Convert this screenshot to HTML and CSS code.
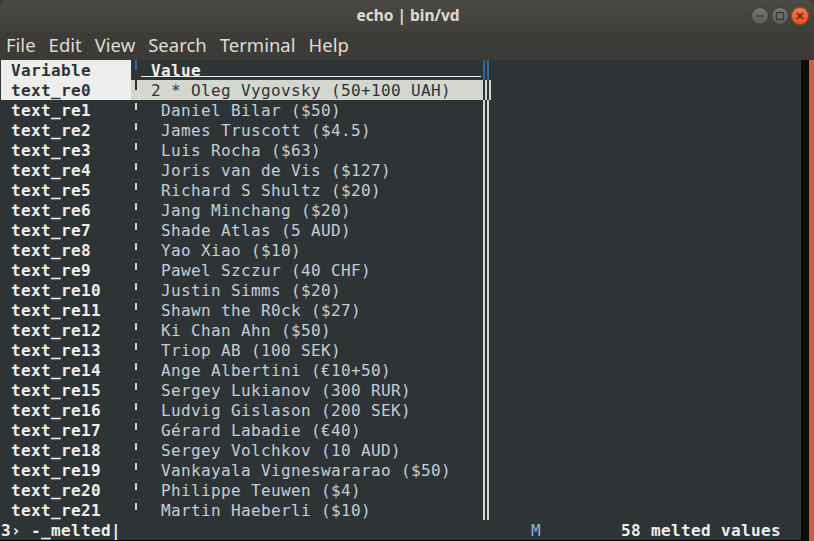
FILE: index.html
```html
<!DOCTYPE html>
<html>
<head>
<meta charset="utf-8">
<link rel="stylesheet" href="styles.css">
</head>
<body>
<div class="window">
  <header class="titlebar">
    <span></span>
    <span class="title">echo | bin/vd</span>
    <div class="controls">
      <span class="btn btn-min"><svg width="18" height="18" viewBox="0 0 18 18"><line x1="5" y1="9" x2="13" y2="9" stroke="#3a3935" stroke-width="1.4"/></svg></span>
      <span class="btn btn-max"><svg width="18" height="18" viewBox="0 0 18 18"><rect x="5.5" y="5.5" width="7" height="7" fill="none" stroke="#3a3935" stroke-width="1.3"/></svg></span>
      <span class="btn btn-close"><svg width="18" height="18" viewBox="0 0 18 18"><path d="M6 6 L12 12 M12 6 L6 12" stroke="#4a1a08" stroke-width="1.4"/></svg></span>
    </div>
  </header>
  <nav class="menubar">
    <span>File</span><span>Edit</span><span>View</span><span>Search</span><span>Terminal</span><span>Help</span>
  </nav>
  <div class="body">
    <div class="term">
      <div class="row head">
        <span class="k cur"> Variable</span><span class="s1 blue"></span><span class="v ul"> Value</span><span class="s2 blue"></span><span class="rest"></span>
      </div>
      <div class="row sel">
        <span class="k cur"> text_re0</span><span class="s1"></span><span class="v"> 2 * Oleg Vygovsky (50+100 UAH)</span><span class="s2"></span><span class="rest"></span>
      </div>
      <div class="row"><span class="k"> text_re1</span><span class="s1"></span><span class="v">  Daniel Bilar ($50)</span><span class="s2"></span><span class="rest"></span></div>
      <div class="row"><span class="k"> text_re2</span><span class="s1"></span><span class="v">  James Truscott ($4.5)</span><span class="s2"></span><span class="rest"></span></div>
      <div class="row"><span class="k"> text_re3</span><span class="s1"></span><span class="v">  Luis Rocha ($63)</span><span class="s2"></span><span class="rest"></span></div>
      <div class="row"><span class="k"> text_re4</span><span class="s1"></span><span class="v">  Joris van de Vis ($127)</span><span class="s2"></span><span class="rest"></span></div>
      <div class="row"><span class="k"> text_re5</span><span class="s1"></span><span class="v">  Richard S Shultz ($20)</span><span class="s2"></span><span class="rest"></span></div>
      <div class="row"><span class="k"> text_re6</span><span class="s1"></span><span class="v">  Jang Minchang ($20)</span><span class="s2"></span><span class="rest"></span></div>
      <div class="row"><span class="k"> text_re7</span><span class="s1"></span><span class="v">  Shade Atlas (5 AUD)</span><span class="s2"></span><span class="rest"></span></div>
      <div class="row"><span class="k"> text_re8</span><span class="s1"></span><span class="v">  Yao Xiao ($10)</span><span class="s2"></span><span class="rest"></span></div>
      <div class="row"><span class="k"> text_re9</span><span class="s1"></span><span class="v">  Pawel Szczur (40 CHF)</span><span class="s2"></span><span class="rest"></span></div>
      <div class="row"><span class="k"> text_re10</span><span class="s1"></span><span class="v">  Justin Simms ($20)</span><span class="s2"></span><span class="rest"></span></div>
      <div class="row"><span class="k"> text_re11</span><span class="s1"></span><span class="v">  Shawn the R0ck ($27)</span><span class="s2"></span><span class="rest"></span></div>
      <div class="row"><span class="k"> text_re12</span><span class="s1"></span><span class="v">  Ki Chan Ahn ($50)</span><span class="s2"></span><span class="rest"></span></div>
      <div class="row"><span class="k"> text_re13</span><span class="s1"></span><span class="v">  Triop AB (100 SEK)</span><span class="s2"></span><span class="rest"></span></div>
      <div class="row"><span class="k"> text_re14</span><span class="s1"></span><span class="v">  Ange Albertini (€10+50)</span><span class="s2"></span><span class="rest"></span></div>
      <div class="row"><span class="k"> text_re15</span><span class="s1"></span><span class="v">  Sergey Lukianov (300 RUR)</span><span class="s2"></span><span class="rest"></span></div>
      <div class="row"><span class="k"> text_re16</span><span class="s1"></span><span class="v">  Ludvig Gislason (200 SEK)</span><span class="s2"></span><span class="rest"></span></div>
      <div class="row"><span class="k"> text_re17</span><span class="s1"></span><span class="v">  Gérard Labadie (€40)</span><span class="s2"></span><span class="rest"></span></div>
      <div class="row"><span class="k"> text_re18</span><span class="s1"></span><span class="v">  Sergey Volchkov (10 AUD)</span><span class="s2"></span><span class="rest"></span></div>
      <div class="row"><span class="k"> text_re19</span><span class="s1"></span><span class="v">  Vankayala Vigneswararao ($50)</span><span class="s2"></span><span class="rest"></span></div>
      <div class="row"><span class="k"> text_re20</span><span class="s1"></span><span class="v">  Philippe Teuwen ($4)</span><span class="s2"></span><span class="rest"></span></div>
      <div class="row"><span class="k"> text_re21</span><span class="s1"></span><span class="v">  Martin Haeberli ($10)</span><span class="s2"></span><span class="rest"></span></div>
      <div class="row status">
        <span class="st-left">3› -_melted|</span><span class="st-mode">M</span><span class="st-right">58 melted values</span>
      </div>
    </div>
    <div class="scroll"></div>
    <div class="edge"></div>
  </div>
</div>
</body>
</html>
```

FILE: styles.css
```css
html, body {
  margin: 0;
  padding: 0;
  background: #2b2b29;
}
.window {
  width: 814px;
  height: 541px;
  display: flex;
  flex-direction: column;
  overflow: hidden;
  background: #3c3b37;
}
.titlebar {
  height: 32px;
  flex: none;
  display: grid;
  grid-template-columns: 1fr auto 1fr;
  align-items: center;
  background: linear-gradient(#4a4944, #3f3e3a);
  border-radius: 7px 7px 0 0;
}
.title {
  font-family: "Noto Sans", "DejaVu Sans", sans-serif;
  font-weight: bold;
  font-size: 15.5px;
  color: #dfdbd2;
  padding-left: 2px;
  padding-bottom: 2px;
}
.controls {
  justify-self: end;
  display: flex;
  gap: 2px;
  padding-right: 5px;
  padding-bottom: 1px;
}
.btn {
  width: 18px;
  height: 18px;
  border-radius: 50%;
  display: block;
  box-sizing: border-box;
}
.btn svg { display: block; }
.btn-min, .btn-max {
  background: linear-gradient(#7a7974, #5a5954);
  box-shadow: inset 0 0 0 1px #35342f;
}
.btn-close {
  background: linear-gradient(#f57f4f, #e4501c);
  box-shadow: inset 0 0 0 1px #8e3a17;
}
.menubar {
  height: 28px;
  box-sizing: border-box;
  padding-bottom: 4px;
  flex: none;
  display: flex;
  align-items: center;
  gap: 13px;
  padding-left: 6px;
  font-family: "Noto Sans", "DejaVu Sans", sans-serif;
  font-size: 18.5px;
  color: #dfdbd2;
  background: #3c3b37;
}
.body {
  flex: 1;
  display: flex;
  background: #000;
}
.term {
  width: 800px;
  padding-left: 1px;
  height: 480px;
  background: #2e3436;
  font-family: "DejaVu Sans Mono", monospace;
  font-size: 16px;
  letter-spacing: 0.368px;
  color: #c4cdd6;
}
.scroll {
  width: 8px;
  height: 481px;
  background: #0b0b0b;
}
.edge {
  flex: 1;
  height: 481px;
  background: #c8643a;
}
.row {
  display: flex;
  height: 20px;
  line-height: 22px;
}
.row > span { white-space: pre; height: 20px; }
.k {
  width: 130px;
  flex: none;
  font-weight: bold;
  color: #eeeeec;
}
.s1 {
  width: 10px;
  flex: none;
  position: relative;
}
.s1::before {
  content: "";
  position: absolute;
  left: 4px;
  top: 3px;
  width: 2px;
  height: 7px;
  background: #d3d7cf;
}
.s1.blue::before {
  top: 0;
  height: 10px;
  background: #3465a4;
}
.v {
  width: 340px;
  flex: none;
}
.s2 {
  width: 10px;
  flex: none;
  position: relative;
}
.s2::before, .s2::after {
  content: "";
  position: absolute;
  top: 0;
  width: 2px;
  height: 20px;
  background: #d3d7cf;
}
.s2::before { left: 2px; }
.s2::after { left: 6px; }
.s2.blue::before, .s2.blue::after { background: #3465a4; }
.rest { flex: 1; }

.head .k.cur {
  background: #eeeeec;
  color: #2e3436;
}
.head .v {
  font-weight: bold;
  color: #eeeeec;
  position: relative;
}
.head .v.ul::after {
  content: "";
  position: absolute;
  left: 0;
  right: 0;
  top: 16px;
  height: 1px;
  background: #eeeeec;
}
.sel .k {
  background: #eeeeec;
  color: #2e3436;
}
.sel .v {
  background: #d3d7cf;
  color: #2e3436;
}
.sel .s1 { background: #d3d7cf; }
.sel .s1::before {
  top: 0;
  height: 10px;
  background: #2e3436;
}
.sel .s2 { background: #d3d7cf; }
.sel .s2::before, .sel .s2::after { background: #2e3436; }

.status {
  font-weight: bold;
  color: #eeeeec;
}
.st-left { width: 530px; flex: none; }
.st-mode { width: 90px; flex: none; font-weight: normal; color: #8fb1d6; }
.st-right { flex: none; }
```
